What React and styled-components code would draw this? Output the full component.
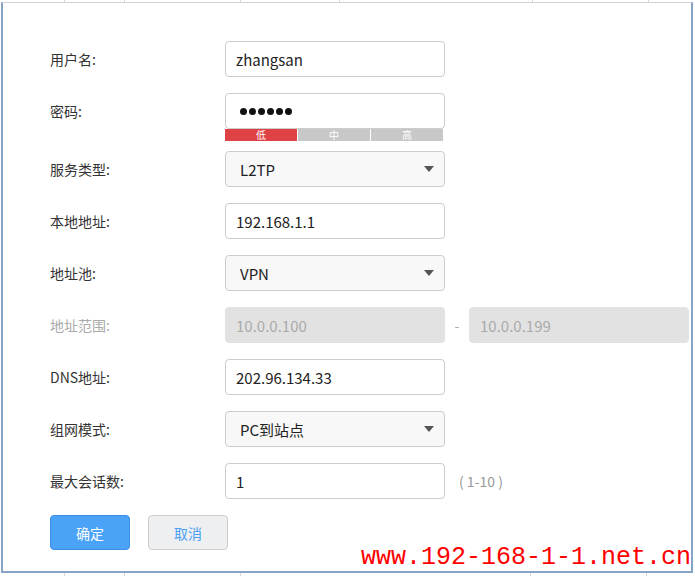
import React from 'react';
import styled, { createGlobalStyle } from 'styled-components';

const Global = createGlobalStyle`
    html, body {
        margin: 0;
        padding: 0;
        background: #ffffff;
    }
    body {
        font-family: "Noto Sans CJK SC", "Noto Sans", sans-serif;
        color: #333333;
    }
`;

const Page = styled.div`
    position: relative;
    width: 695px;
    height: 576px;
    overflow: hidden;
`;

const Ticks = styled.div`
    display: flex;
    height: ${p => p.h}px;
    padding-left: 64px;
`;

const Tick = styled.span`
    width: ${p => p.w}px;
    border-left: 1px solid #d6d6d6;
`;

const Frame = styled.div`
    box-sizing: border-box;
    margin-left: 1px;
    width: 692px;
    height: 571px;
    border-top: 1px solid #d4d4d4;
    border-left: 2px solid #86a5c6;
    border-right: 2px solid #86a5c6;
    border-bottom: 2px solid #86a5c6;
    padding: 38px 0 0 47px;
`;

const Form = styled.div`
    display: flex;
    flex-direction: column;
    gap: 16px;
`;

const Row = styled.div`
    display: flex;
    align-items: flex-start;
`;

const Label = styled.div`
    width: 175px;
    line-height: 36px;
    font-size: 14px;
    color: ${p => (p.disabled ? '#aaaaaa' : '#333333')};
`;

const Field = styled.div`
    display: flex;
    flex-direction: column;
    width: 220px;
`;

const Input = styled.div`
    box-sizing: border-box;
    width: 220px;
    height: 36px;
    display: flex;
    align-items: center;
    padding: 0 ${p => (p.select ? 14 : 10)}px;
    border: 1px solid ${p => (p.disabled ? '#e2e2e2' : '#cccccc')};
    border-radius: 4px;
    background: ${p => (p.disabled ? '#e2e2e2' : p.select ? '#f8f8f8' : '#ffffff')};
    color: ${p => (p.disabled ? '#aaaaaa' : '#222222')};
    font-size: 15px;
    justify-content: space-between;
`;

const Dots = styled.div`
    display: flex;
    gap: 2px;
    margin-left: 4px;
`;

const Dot = styled.span`
    width: 7px;
    height: 7px;
    border-radius: 50%;
    background: #111111;
`;

const Arrow = styled.span`
    width: 0;
    height: 0;
    border-left: 5px solid transparent;
    border-right: 5px solid transparent;
    border-top: 6px solid #555555;
    margin-right: -4px;
`;

const Strength = styled.div`
    display: flex;
    gap: 1px;
    width: 218px;
    height: 12px;
    margin-bottom: -6px;
`;

const Level = styled.span`
    flex: 1;
    background: ${p => (p.active ? '#df4244' : '#c8c8c8')};
    color: #ffffff;
    font-size: 10px;
    line-height: 12px;
    text-align: center;
`;

const Dash = styled.span`
    width: 24px;
    line-height: 36px;
    text-align: center;
    color: #aaaaaa;
    font-size: 14px;
`;

const Hint = styled.span`
    line-height: 36px;
    margin-left: 14px;
    font-size: 14px;
    color: #999999;
`;

const Buttons = styled.div`
    display: flex;
    gap: 18px;
`;

const Button = styled.div`
    box-sizing: border-box;
    width: 80px;
    height: 35px;
    display: flex;
    align-items: center;
    justify-content: center;
    border-radius: 4px;
    font-size: 14px;
    border: 1px solid ${p => (p.primary ? '#3a8ee6' : '#cccccc')};
    background: ${p => (p.primary ? '#4aa3f7' : '#eeeff1')};
    color: ${p => (p.primary ? '#ffffff' : '#4a9ff5')};
`;

const Watermark = styled.div`
    position: absolute;
    left: 361px;
    top: 543px;
    font-family: "Liberation Mono", monospace;
    font-size: 25px;
    color: #ff0000;
    white-space: nowrap;
`;

function TextRow({ label, value, disabled }) {
    return (
        <Row>
            <Label disabled={disabled}>{label}</Label>
            <Input disabled={disabled}>{value}</Input>
        </Row>
    );
}

function SelectRow({ label, value }) {
    return (
        <Row>
            <Label>{label}</Label>
            <Input select>
                <span>{value}</span>
                <Arrow />
            </Input>
        </Row>
    );
}

export default function App() {
    return (
        <Page>
            <Global />
            <Ticks h={2}>
                <Tick w={59} /><Tick w={115} /><Tick w={98} /><Tick w={192} /><Tick w={115} /><Tick w={40} />
            </Ticks>
            <Frame>
                <Form>
                    <TextRow label="用户名:" value="zhangsan" />
                    <Row>
                        <Label>密码:</Label>
                        <Field>
                            <Input>
                                <Dots>
                                    {[0, 1, 2, 3, 4, 5].map(i => <Dot key={i} />)}
                                </Dots>
                            </Input>
                            <Strength>
                                <Level active>低</Level>
                                <Level>中</Level>
                                <Level>高</Level>
                            </Strength>
                        </Field>
                    </Row>
                    <SelectRow label="服务类型:" value="L2TP" />
                    <TextRow label="本地地址:" value="192.168.1.1" />
                    <SelectRow label="地址池:" value="VPN" />
                    <Row>
                        <Label disabled>地址范围:</Label>
                        <Input disabled>10.0.0.100</Input>
                        <Dash>-</Dash>
                        <Input disabled>10.0.0.199</Input>
                    </Row>
                    <TextRow label="DNS地址:" value="202.96.134.33" />
                    <SelectRow label="组网模式:" value="PC到站点" />
                    <Row>
                        <Label>最大会话数:</Label>
                        <Input>1</Input>
                        <Hint>( 1-10 )</Hint>
                    </Row>
                    <Buttons>
                        <Button primary>确定</Button>
                        <Button>取消</Button>
                    </Buttons>
                </Form>
            </Frame>
            <Ticks h={3}>
                <Tick w={59} /><Tick w={115} /><Tick w={289} /><Tick w={115} /><Tick w={40} />
            </Ticks>
            <Watermark>www.192-168-1-1.net.cn</Watermark>
        </Page>
    );
}
